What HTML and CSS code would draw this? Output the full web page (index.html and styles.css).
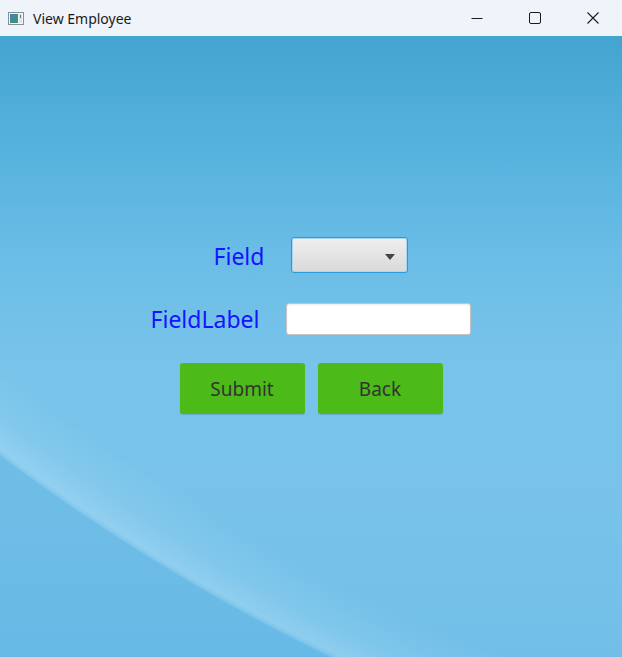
FILE: index.html
```html
<!DOCTYPE html>
<html>
<head>
<meta charset="utf-8">
<title>View Employee</title>
<link rel="stylesheet" href="styles.css">
</head>
<body>
<div class="window">
  <div class="titlebar">
    <div class="title-left">
      <svg class="app-icon" width="16" height="13" viewBox="0 0 16 13">
        <defs>
          <linearGradient id="ig" x1="0" y1="0" x2="1" y2="1">
            <stop offset="0" stop-color="#4a7fb8"/>
            <stop offset="1" stop-color="#3a9a6a"/>
          </linearGradient>
        </defs>
        <rect x="0.5" y="0.5" width="15" height="12" fill="#f4f6f8" stroke="#8a9098"/>
        <rect x="2" y="2" width="8" height="9" fill="url(#ig)"/>
        <rect x="11" y="2" width="3" height="9" fill="#dfe3e6"/>
        <rect x="12" y="3" width="1" height="3" fill="#5a8a6a"/>
      </svg>
      <span class="title-text">View Employee</span>
    </div>
    <div class="controls">
      <div class="ctrl">
        <svg width="12" height="12" viewBox="0 0 12 12"><path d="M0.5 6.5H11.5" stroke="#1b1b1b" stroke-width="1"/></svg>
      </div>
      <div class="ctrl">
        <svg width="12" height="12" viewBox="0 0 12 12"><rect x="0.5" y="0.5" width="11" height="11" rx="1.5" fill="none" stroke="#1b1b1b" stroke-width="1"/></svg>
      </div>
      <div class="ctrl">
        <svg width="12" height="12" viewBox="0 0 12 12"><path d="M0.5 0.5L11.5 11.5M11.5 0.5L0.5 11.5" stroke="#1b1b1b" stroke-width="1.1"/></svg>
      </div>
    </div>
  </div>
  <div class="content">
    <div class="form">
      <div class="row row-field">
        <span class="label">Field</span>
        <div class="combo"><span class="arrow"></span></div>
      </div>
      <div class="row row-label">
        <span class="label">FieldLabel</span>
        <div class="textfield"></div>
      </div>
      <div class="row buttons">
        <button class="btn">Submit</button>
        <button class="btn">Back</button>
      </div>
    </div>
  </div>
</div>
</body>
</html>
```

FILE: styles.css
```css
html, body {
  margin: 0;
  padding: 0;
  width: 622px;
  height: 657px;
  overflow: hidden;
}

.window {
  width: 622px;
  height: 657px;
  display: flex;
  flex-direction: column;
  font-family: "Noto Sans", "Open Sans", sans-serif;
}

.titlebar {
  height: 36px;
  flex: none;
  background: #eff3fa;
  display: flex;
  align-items: center;
  justify-content: space-between;
}

.title-left {
  display: flex;
  align-items: center;
  padding-left: 8px;
}

.app-icon {
  display: block;
  margin-right: 9px;
}

.title-text {
  font-size: 14px;
  color: #1a1a1a;
}

.controls {
  display: flex;
  height: 36px;
}

.ctrl {
  width: 58px;
  display: flex;
  align-items: center;
  justify-content: center;
}

.ctrl svg {
  display: block;
}

.content {
  flex: 1;
  position: relative;
  background:
    radial-gradient(circle 1985px at 1195px -1166px,
      rgba(255,255,255,0) 0,
      rgba(255,255,255,0) 1915px,
      rgba(190,230,250,0.16) 1955px,
      rgba(205,238,252,0.30) 1980px,
      rgba(205,238,252,0.12) 1984px,
      rgba(40,150,210,0.13) 1986px,
      rgba(40,150,210,0.13) 2400px),
    linear-gradient(180deg, #44a4d0 0px, #55b2dd 110px, #6abde6 220px, #78c3ea 320px, #79c3ea 450px, #71bfe8 621px);
  display: flex;
  justify-content: center;
}

.form {
  display: flex;
  flex-direction: column;
  align-items: center;
  padding-top: 201px;
}

.row {
  display: flex;
  align-items: center;
  gap: 27px;
}

.label {
  font-size: 23px;
  color: #1414ff;
  line-height: 1;
}

.row-field .label {
  padding-top: 2px;
}

.combo {
  width: 115px;
  height: 34px;
  border: 1px solid #2c9ad8;
  border-radius: 3px;
  box-shadow: inset 0 0 0 1px #a9d6ee;
  background: linear-gradient(180deg, #efefef 0%, #e4e4e4 50%, #d9d9d9 100%);
  position: relative;
}

.arrow {
  position: absolute;
  left: 93px;
  top: 16px;
  width: 0;
  height: 0;
  border-left: 5.5px solid transparent;
  border-right: 5.5px solid transparent;
  border-top: 6px solid #444;
}

.row-label {
  margin-top: 30px;
}

.row-label .label {
  padding-top: 0;
}

.textfield {
  width: 183px;
  height: 30px;
  border: 1px solid #c4c4c4;
  border-radius: 3px;
  background: #fff;
  box-shadow: inset 0 1px 2px rgba(0,0,0,0.08);
}

.buttons {
  margin-top: 28px;
  gap: 13px;
}

.btn {
  width: 125px;
  height: 51px;
  border: none;
  border-radius: 3px;
  background: #4cba18;
  color: #333333;
  font-family: "Noto Sans", "Open Sans", sans-serif;
  font-size: 19px;
  padding: 0;
  margin: 0;
  box-shadow: 0 1px 1px rgba(0,0,0,0.12);
}
```
